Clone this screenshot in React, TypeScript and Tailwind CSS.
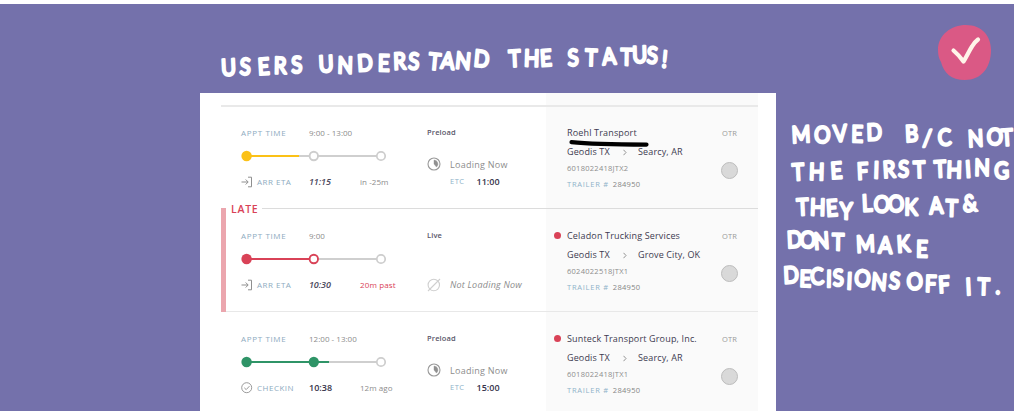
import React from "react";

type Tone = "yellow" | "red" | "green";

type Load = {
  appt: string;
  tone: Tone;
  progressTo: number;
  reached: "open" | "active" | "done";
  arrival: "ARR ETA" | "CHECKIN";
  time: string;
  delta: string;
  kind: string;
  etc?: string;
  carrier: string;
  alert: boolean;
  destination: string;
  code: string;
};

const COLORS: Record<Tone, string> = { yellow: "#fbc117", red: "#d94257", green: "#2f9467" };

const LOADS: Load[] = [
  { appt: "9:00 - 13:00", tone: "yellow", progressTo: 58, reached: "open", arrival: "ARR ETA", time: "11:15", delta: "in -25m", kind: "Preload", etc: "11:00", carrier: "Roehl Transport", alert: false, destination: "Searcy, AR", code: "6018022418JTX2" },
  { appt: "9:00", tone: "red", progressTo: 72, reached: "active", arrival: "ARR ETA", time: "10:30", delta: "20m past", kind: "Live", carrier: "Celadon Trucking Services", alert: true, destination: "Grove City, OK", code: "6024022518JTX1" },
  { appt: "12:00 - 13:00", tone: "green", progressTo: 88, reached: "done", arrival: "CHECKIN", time: "10:38", delta: "12m ago", kind: "Preload", etc: "15:00", carrier: "Sunteck Transport Group, Inc.", alert: true, destination: "Searcy, AR", code: "6018022418JTX1" },
];

function Timeline({ load }: { load: Load }) {
  const c = COLORS[load.tone];
  const mid = load.reached === "open" ? "#cdcdcd" : c;
  return (
    <svg className="block h-[30px] w-[146px]" viewBox="0 0 146 30" fill="none">
      <path d="M5 15H140" stroke="#cfcfcf" strokeWidth="2" />
      <path d={`M5 15H${load.progressTo}`} stroke={c} strokeWidth="2" />
      <circle cx="5.6" cy="15" r="5.2" fill={c} />
      <circle cx="72.8" cy="15" r="4.2" fill={load.reached === "done" ? c : "#fff"} stroke={mid} strokeWidth="1.9" />
      <circle cx="140" cy="15" r="4.2" fill="#fff" stroke="#cdcdcd" strokeWidth="1.7" />
    </svg>
  );
}

function ArriveIcon() {
  return (
    <svg className="h-3 w-3" viewBox="0 0 12 12" fill="none" stroke="#8f8f8f" strokeWidth="1">
      <path d="M0.5 6H7M4.7 3.5L7.2 6L4.7 8.5M7 1.2H10.5V10.8H7" />
    </svg>
  );
}

function CheckIcon() {
  return (
    <svg className="h-3 w-3" viewBox="0 0 12 12" fill="none" stroke="#8f8f8f" strokeWidth="0.9">
      <circle cx="5.7" cy="5.7" r="5" />
      <path d="M3.3 5.8L5.2 7.6L8.5 4.1" />
    </svg>
  );
}

function ProgressIcon() {
  return (
    <svg className="h-3.5 w-3.5" viewBox="0 0 14 14" fill="none">
      <circle cx="7" cy="7" r="6" stroke="#999" strokeWidth="1.1" />
      <path d="M7 3A4 4 0 0 1 9.5 10.1L7 7Z" fill="#909090" stroke="#909090" strokeWidth="0.4" />
    </svg>
  );
}

function IdleIcon() {
  return (
    <svg className="h-3.5 w-3.5" viewBox="0 0 14 14" fill="none" stroke="#cfcfcf" strokeWidth="1.1">
      <circle cx="6.8" cy="7" r="5.7" />
      <path d="M1 13L13 1" />
    </svg>
  );
}

function LoadRow({ load }: { load: Load }) {
  const late = load.tone === "red";
  return (
    <div className="flex h-[103px] shrink-0">
      <div className="w-[207px] pt-[18px] pl-[21px]">
        <div className="flex h-[17px] items-center text-[8px]">
          <span className="w-[68px] font-medium tracking-[0.65px] text-[#8eabc0]">APPT TIME</span>
          <span className="tracking-[0.02px] text-[#8c8c8c]">{load.appt}</span>
        </div>
        <Timeline load={load} />
        <div className="flex h-[22px] items-center text-[8px]">
          <span className="w-4">{load.arrival === "CHECKIN" ? <CheckIcon /> : <ArriveIcon />}</span>
          <span className="w-[52px] font-medium tracking-[0.5px] text-[#8eabc0]">{load.arrival}</span>
          <span className={load.arrival === "CHECKIN" ? "w-[51px] text-[9px] font-semibold text-[#36334a]" : "w-[51px] text-[9px] font-semibold tracking-[-0.1px] text-[#4a475c] italic"}>{load.time}</span>
          <span className={late ? "tracking-[0.15px] text-[#d94257]" : "tracking-[0.05px] text-[#8c8c8c]"}>{load.delta}</span>
        </div>
      </div>
      <div className="w-[119px] pt-[18px]">
        <div className="flex h-[17px] items-center text-[7.5px] font-semibold tracking-[0.15px] text-[#5a576a]">{load.kind}</div>
        {load.etc ? (
          <>
            <div className="mt-[14px] flex h-[18px] items-center gap-[9px] text-[9px] tracking-[0.27px] text-[#8c8c8c]">
              <ProgressIcon />
              <span className="pt-[2px]">Loading Now</span>
            </div>
            <div className="flex h-[18px] items-center pl-[23px]">
              <span className="w-[26.5px] text-[7.5px] font-medium tracking-[0.5px] text-[#8fb2c9]">ETC</span>
              <span className="text-[9px] font-semibold text-[#36334a]">{load.etc}</span>
            </div>
          </>
        ) : (
          <div className="mt-[32px] flex h-[18px] items-center gap-[9px] text-[9px] tracking-[0.22px] text-[#8c8c8c] italic">
            <IdleIcon />
            <span>Not Loading Now</span>
          </div>
        )}
      </div>
      <div className="flex w-[212px] pt-[18px]">
        <div className="flex w-[21px] items-start pt-[5px] pl-2">
          {load.alert && <span className="h-[7px] w-[7px] rounded-full bg-[#d94257]" />}
        </div>
        <div className="w-[155px] whitespace-nowrap">
          <div className="flex h-[18px] items-center text-[9px] tracking-[0.16px] text-[#3d3a50]">{load.carrier}</div>
          <div className="flex h-5 items-center text-[9px] tracking-[0.13px] text-[#3d3a50]">
            <span className="w-[56px]">Geodis TX</span>
            <svg className="mr-[11px] h-[7px] w-1" viewBox="0 0 4 7" fill="none" stroke="#888">
              <path d="M0.5 0.8L3 3.5L0.5 6.2" strokeWidth="0.9" />
            </svg>
            <span>{load.destination}</span>
          </div>
          <div className="flex h-[14px] items-center text-[7.5px] tracking-[0.27px] text-[#8c8c8c]">{load.code}</div>
          <div className="flex h-[18px] items-center gap-[4px] text-[7.5px]">
            <span className="font-medium tracking-[0.75px] text-[#8fb2c9]">TRAILER #</span>
            <span className="tracking-[0.3px] text-[#858585]">284950</span>
          </div>
        </div>
        <div className="flex flex-col">
          <div className="flex h-[19px] items-center text-[7.5px] tracking-[0.2px] text-[#999]">OTR</div>
          <div className="mt-[19px] -ml-px h-[17px] w-[17px] rounded-full border border-[#bdbdbd] bg-[#d9d9d9]" />
        </div>
      </div>
    </div>
  );
}

type Note = { text: string; x: number[]; y: number[] };

const NOTES: Note[] = [
  { text: "USERS", x: [229, 245, 264, 280, 297], y: [76, 74.5, 75, 73.5, 73] },
  { text: "UNDERSTAND", x: [326.5, 345, 365.5, 383.5, 400, 413.5, 434, 447, 462.5, 481], y: [72.5, 73, 71.5, 71, 69.5, 69, 69, 68, 68, 66] },
  { text: "THE", x: [515, 531.5, 546.5], y: [67, 66, 66.5] },
  { text: "STATUS!", x: [573.5, 591, 609.5, 626.5, 640, 652, 664], y: [66, 65.5, 65, 65, 63, 63, 67] },
  { text: "MOVED", x: [801.5, 822, 840.7, 857, 874.5], y: [143, 142.5, 142, 142, 140.5] },
  { text: "B/C", x: [912, 927, 945], y: [142, 146, 146] },
  { text: "NOT", x: [976, 994.5, 1007.5], y: [147, 144.5, 146] },
  { text: "THE", x: [798.5, 816.5, 837], y: [180.5, 179.5, 179] },
  { text: "FIRST", x: [863, 876, 889.5, 903.5, 919.5], y: [179.5, 178, 178, 177, 178] },
  { text: "THING", x: [940.5, 954, 968.5, 982, 1002], y: [177.5, 177.5, 177.5, 175.5, 179] },
  { text: "THEY", x: [803, 817.5, 832.5, 846], y: [215.5, 215, 216.5, 219] },
  { text: "LOOK", x: [867.5, 881.5, 896.5, 911], y: [211.5, 212, 212.5, 215] },
  { text: "AT&", x: [936.5, 951.5, 970.5], y: [214, 216, 212] },
  { text: "DONT", x: [795, 807.5, 822, 838], y: [248, 247.5, 249.5, 250] },
  { text: "MAKE", x: [866, 885, 904, 922], y: [252.5, 253, 252.5, 257] },
  { text: "DECISIONS", x: [791.5, 805, 817.5, 829, 838.5, 849, 862, 878.5, 894], y: [283.5, 286.5, 285, 287, 286, 289, 285.5, 289, 288] },
  { text: "OFF", x: [915, 930.5, 944.5], y: [290, 291.5, 293] },
  { text: "IT.", x: [969, 983.5, 998], y: [295, 294.5, 294] },
];

const CONDENSE = 0.88;

function Handwriting() {
  return (
    <svg className="pointer-events-none absolute inset-0 h-[412px] w-[1014px]" viewBox="0 0 1014 412">
      <g
        transform={`scale(${CONDENSE} 1)`}
        fill="#fff"
        stroke="#fff"
        strokeWidth="2.5"
        strokeLinejoin="round"
        strokeLinecap="round"
        textAnchor="middle"
        className="font-['Lato',sans-serif] text-[23px] font-normal"
      >
        {NOTES.map((n) => (
          <text key={n.text + n.x[0]} x={n.x.map((v) => (v / CONDENSE).toFixed(1)).join(" ")} y={n.y.join(" ")} rotate="-3 2 -4 1 -2 3 6">
            {n.text}
          </text>
        ))}
      </g>
      <path d="M571.5 142.2C586 143.8 612 144.6 646.5 144.6" fill="none" stroke="#000" strokeWidth="4.2" strokeLinecap="round" />
      <path d="M938 50C938 35 951 25 966 25C982 25 991 36 991 50C991 68 981 80 965 80C951 80 944 73 941 62C939 59 938 55 938 50Z" fill="#da5985" />
      <path d="M953.5 50.5C957 53.5 960 56.5 963.5 61.5C966.5 57 969 51 972 46.5C974 43 976 41 978 39.5" fill="none" stroke="#fff5e9" strokeWidth="4.2" strokeLinecap="round" strokeLinejoin="round" />
    </svg>
  );
}

export default function App() {
  return (
    <main className="relative h-[412px] w-[1017px] overflow-hidden bg-white pt-1 font-['Open_Sans','Noto_Sans',sans-serif]">
      <div className="h-[407px] w-[1013.5px] bg-[#7471ab] pt-[89px] pl-[200px]">
        <section className="h-[318px] w-[576px] overflow-hidden bg-white pl-[21px]">
          <div className="flex h-full w-[537px] flex-col bg-[linear-gradient(90deg,#fff_325px,#fafafa_325px)]">
            <div className="h-3 shrink-0" />
            <div className="-mb-px h-[2px] shrink-0 bg-[#e9e9e9]" />
            <div className="-ml-px h-[102px] w-[538px] shrink-0">
              <LoadRow load={LOADS[0]} />
            </div>
            <div className="relative h-[104px] shrink-0 border-t border-b border-t-[#dcdcdc] border-b-[#e8e8e8]">
              <div className="absolute -top-px left-0 h-[104px] w-[5px] bg-[#eba6ae]" />
              <span className="absolute -top-[6px] left-[5px] bg-white pr-[4px] pl-[5px] text-[10.5px] leading-[12px] font-semibold tracking-[0.75px] text-[#d94257]">LATE</span>
              <div className="-ml-px w-[538px]">
                <LoadRow load={LOADS[1]} />
              </div>
            </div>
            <div className="-ml-px w-[538px] shrink-0">
              <LoadRow load={LOADS[2]} />
            </div>
          </div>
        </section>
      </div>
      <Handwriting />
    </main>
  );
}
